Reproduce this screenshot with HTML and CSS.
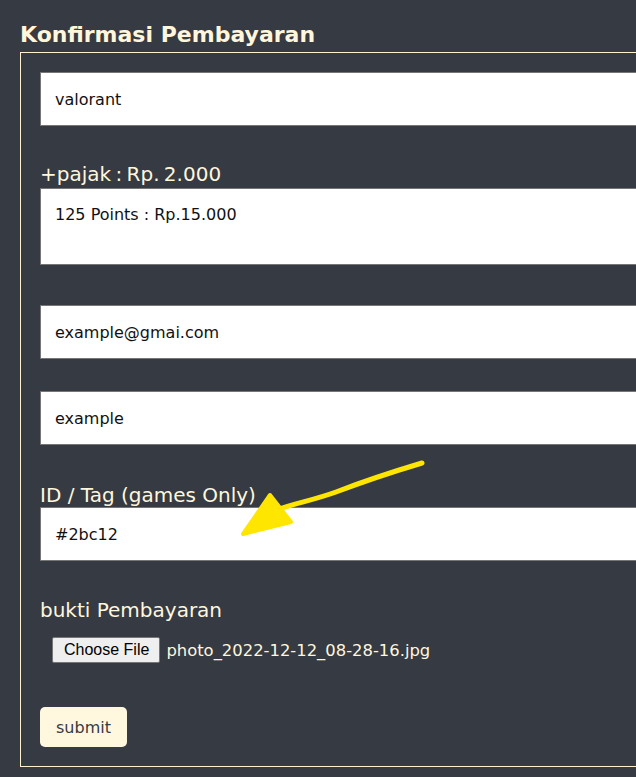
FILE: index.html
```html
<!DOCTYPE html>
<html lang="id">
<head>
<meta charset="utf-8">
<title>Konfirmasi Pembayaran</title>
<link rel="stylesheet" href="styles.css">
</head>
<body>
<main class="page">
  <h1 class="title">Konfirmasi Pembayaran</h1>
  <form class="box">
    <input class="field" type="text" value="valorant">
    <label class="label label-pajak">+pajak : Rp. 2.000</label>
    <textarea class="area">125 Points : Rp.15.000</textarea>
    <input class="field field-email" type="text" value="example@gmai.com">
    <input class="field field-name" type="text" value="example">
    <label class="label label-id">ID / Tag (games Only)</label>
    <input class="field" type="text" value="#2bc12">
    <label class="label label-bukti">bukti Pembayaran</label>
    <div class="file">
      <span class="file-btn">Choose File</span>
      <span class="file-name">photo_2022-12-12_08-28-16.jpg</span>
    </div>
    <button class="submit" type="button">submit</button>
  </form>
  <svg class="annot" width="636" height="777" viewBox="0 0 636 777" aria-hidden="true">
    <path d="M422 463 C392 472 362 482 336 492 C314 500 296 503 276 510" fill="none" stroke="#ffe600" stroke-width="5" stroke-linecap="round" stroke-linejoin="round"/>
    <polygon points="270,495 291,522 243,534" fill="#ffe600" stroke="#ffe600" stroke-width="4" stroke-linejoin="round"/>
  </svg>
</main>
</body>
</html>
```
FILE: styles.css
```css
html, body {
  margin: 0;
  padding: 0;
  overflow: hidden;
  background: #363a42;
}

.page {
  position: relative;
  width: 636px;
  height: 777px;
  padding: 21px 0 0 20px;
  box-sizing: border-box;
  overflow: hidden;
  font-family: "DejaVu Sans", sans-serif;
  color: #fff6de;
}

.title {
  margin: 0 0 3px 0;
  font-size: 22px;
  line-height: 28px;
  font-weight: bold;
  color: #fff6dc;
  white-space: nowrap;
}

.box {
  width: 780px;
  box-sizing: border-box;
  border: 1px solid #fff1cf;
  padding: 19px 20px 19px 19px;
  display: flex;
  flex-direction: column;
  align-items: stretch;
}

.field,
.area {
  display: block;
  box-sizing: border-box;
  width: 100%;
  margin: 0;
  border: 1px solid #767676;
  background: #ffffff;
  color: #111111;
  font-family: "DejaVu Sans", sans-serif;
  font-size: 16px;
  outline: none;
}

.field {
  height: 54px;
  padding: 0 14px;
}

.area {
  height: 77px;
  padding: 14px 14px;
  line-height: 24px;
  resize: none;
}

.label {
  display: block;
  font-size: 20px;
  line-height: 24px;
  color: #fff6de;
  white-space: nowrap;
}

.label-pajak { margin: 36px 0 2px 0; word-spacing: -2px; }
.field-email { margin-top: 40px; }
.field-name { margin-top: 32px; }
.label-id { margin: 38px 0 0 0; }
.label-bukti { margin: 37px 0 0 0; }

.file {
  align-self: flex-start;
  display: flex;
  align-items: center;
  gap: 6px;
  margin: 15px 0 0 12px;
}

.file-btn {
  box-sizing: border-box;
  height: 26px;
  line-height: 24px;
  padding: 0 10px 0 11px;
  border: 1px solid #767676;
  border-radius: 2px;
  background: #efefef;
  color: #000000;
  font-family: "Liberation Sans", Arial, sans-serif;
  font-size: 16px;
}

.file-name {
  font-size: 16.4px;
  color: #fff6de;
  white-space: nowrap;
}

.submit {
  align-self: flex-start;
  margin-top: 44px;
  height: 40px;
  padding: 0 16px;
  border: none;
  border-radius: 5px;
  background: #fff8df;
  color: #363a42;
  font-family: "DejaVu Sans", sans-serif;
  font-size: 16px;
}

.annot {
  position: absolute;
  top: 0;
  left: 0;
  pointer-events: none;
}
```
